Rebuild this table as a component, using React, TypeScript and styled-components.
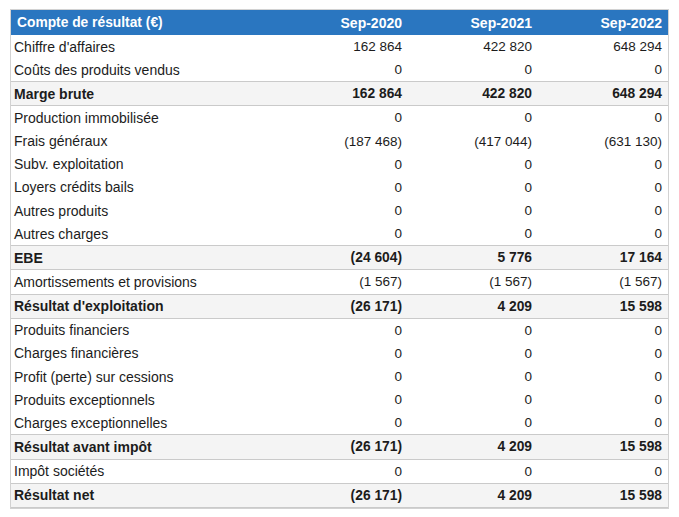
import styled, { createGlobalStyle } from 'styled-components';

const GlobalStyle = createGlobalStyle`
  html, body {
    margin: 0;
    padding: 0;
    background: #ffffff;
  }
  body {
    font-family: 'Liberation Sans', Arial, Helvetica, sans-serif;
    font-size: 14px;
    color: #1c1c1c;
  }
`;

const Page = styled.div`
  padding: 9px 0 0 10px;
`;

const Panel = styled.div`
  width: 657px;
  border: 1px solid #d2d2d2;
`;

const HeaderRow = styled.div`
  display: grid;
  grid-template-columns: 1fr 130px 130px 130px;
  align-items: center;
  height: 25px;
  background: #2a76c0;
  color: #ffffff;
  font-weight: bold;
  font-size: 14px;
`;

const HeaderCell = styled.div<{ $first?: boolean }>`
  padding: ${(p) => (p.$first ? '0 0 0 6px' : '0 6px 0 0')};
  text-align: ${(p) => (p.$first ? 'left' : 'right')};
  font-size: ${(p) => (p.$first ? '13.8px' : '14px')};
  white-space: nowrap;
`;

const Row = styled.div<{ $total?: boolean }>`
  display: grid;
  grid-template-columns: 1fr 130px 130px 130px;
  align-items: center;
  height: 23.15px;
  background: ${(p) => (p.$total ? '#f4f4f4' : '#ffffff')};
  font-weight: ${(p) => (p.$total ? 'bold' : 'normal')};
  border-top: ${(p) => (p.$total ? '1px solid #cacaca' : 'none')};
  border-bottom: ${(p) => (p.$total ? '1px solid #cacaca' : 'none')};
`;

const Label = styled.div`
  padding-left: 3px;
  font-size: 14px;
  white-space: nowrap;
`;

const Value = styled.div<{ $total?: boolean }>`
  padding-right: 6px;
  text-align: right;
  font-size: ${(p) => (p.$total ? '13.8px' : '13.5px')};
  white-space: nowrap;
`;

type Line = {
  label: string;
  values: [string, string, string];
  total?: boolean;
};

const years = ['Sep-2020', 'Sep-2021', 'Sep-2022'];

const lines: Line[] = [
  { label: "Chiffre d'affaires", values: ['162 864', '422 820', '648 294'] },
  { label: 'Coûts des produits vendus', values: ['0', '0', '0'] },
  { label: 'Marge brute', values: ['162 864', '422 820', '648 294'], total: true },
  { label: 'Production immobilisée', values: ['0', '0', '0'] },
  { label: 'Frais généraux', values: ['(187 468)', '(417 044)', '(631 130)'] },
  { label: 'Subv. exploitation', values: ['0', '0', '0'] },
  { label: 'Loyers crédits bails', values: ['0', '0', '0'] },
  { label: 'Autres produits', values: ['0', '0', '0'] },
  { label: 'Autres charges', values: ['0', '0', '0'] },
  { label: 'EBE', values: ['(24 604)', '5 776', '17 164'], total: true },
  { label: 'Amortissements et provisions', values: ['(1 567)', '(1 567)', '(1 567)'] },
  { label: "Résultat d'exploitation", values: ['(26 171)', '4 209', '15 598'], total: true },
  { label: 'Produits financiers', values: ['0', '0', '0'] },
  { label: 'Charges financières', values: ['0', '0', '0'] },
  { label: 'Profit (perte) sur cessions', values: ['0', '0', '0'] },
  { label: 'Produits exceptionnels', values: ['0', '0', '0'] },
  { label: 'Charges exceptionnelles', values: ['0', '0', '0'] },
  { label: 'Résultat avant impôt', values: ['(26 171)', '4 209', '15 598'], total: true },
  { label: 'Impôt sociétés', values: ['0', '0', '0'] },
  { label: 'Résultat net', values: ['(26 171)', '4 209', '15 598'], total: true },
];

const App = (): JSX.Element => {
  return (
    <Page>
      <GlobalStyle />
      <Panel>
        <HeaderRow>
          <HeaderCell $first>Compte de résultat (€)</HeaderCell>
          {years.map((y) => (
            <HeaderCell key={y}>{y}</HeaderCell>
          ))}
        </HeaderRow>
        {lines.map((line) => (
          <Row
            key={line.label}
            $total={line.total}
          >
            <Label>{line.label}</Label>
            {line.values.map((v, i) => (
              <Value
                key={i}
                $total={line.total}
              >
                {v}
              </Value>
            ))}
          </Row>
        ))}
      </Panel>
    </Page>
  );
};

export default App;
